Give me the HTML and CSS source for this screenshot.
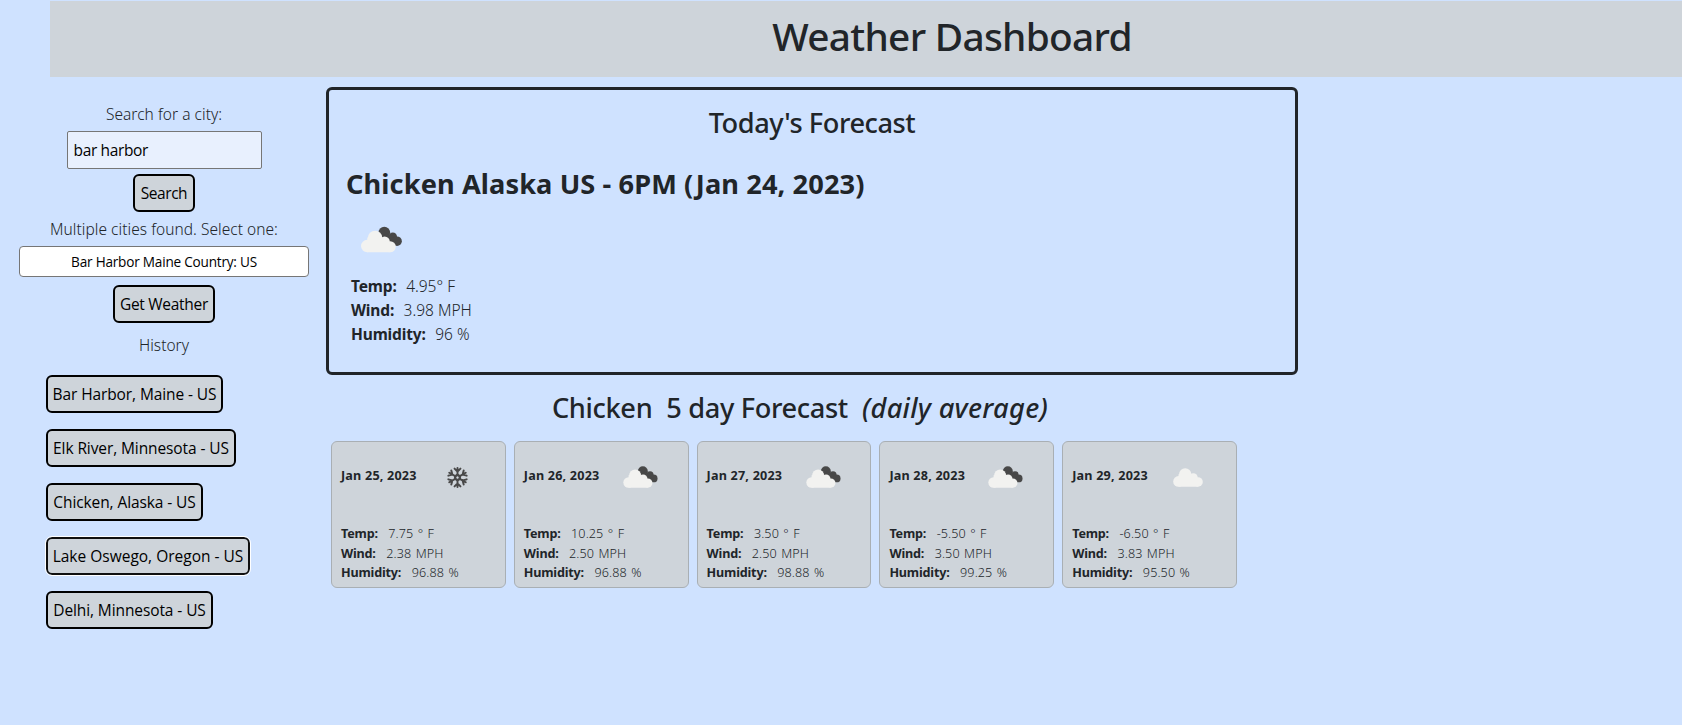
FILE: index.html
```html
<!DOCTYPE html>
<html lang="en">
<head>
<meta charset="utf-8">
<title>Weather Dashboard</title>
<link rel="stylesheet" href="styles.css">
</head>
<body>
<svg width="0" height="0" class="defs" aria-hidden="true">
  <symbol id="cloud" viewBox="32 44 106 68">
    <g fill="#f2f2f0"><circle cx="75" cy="67" r="22"/><circle cx="51" cy="92" r="19"/><circle cx="104" cy="79" r="16"/><circle cx="121" cy="94" r="17"/><path d="M51 66h52l18 24v21H51z"/></g>
  </symbol>
  <symbol id="clouds" viewBox="32 32 125 80">
    <g fill="#484848"><circle cx="103" cy="51" r="18"/><circle cx="129" cy="64" r="13"/><circle cx="142" cy="77" r="14.5"/><path d="M103 51l25 10 12 28-25-5z"/></g>
    <g fill="#f2f2f0"><circle cx="75" cy="67" r="22"/><circle cx="51" cy="92" r="19"/><circle cx="104" cy="79" r="16"/><circle cx="121" cy="94" r="17"/><path d="M51 66h43l27 24v21H51z"/></g>
  </symbol>
  <symbol id="snow" viewBox="-32 -32 64 64">
    <g id="arm" fill="none" stroke="#484848" stroke-width="6" stroke-linecap="round"><path d="M0-8V-29M-9-27L0-18L9-27M0-8L7-4V4"/></g>
    <use href="#arm" transform="rotate(60)"/><use href="#arm" transform="rotate(120)"/><use href="#arm" transform="rotate(180)"/><use href="#arm" transform="rotate(240)"/><use href="#arm" transform="rotate(300)"/>
  </symbol>
</svg>
<header class="banner"><h1>Weather Dashboard</h1></header>
<main class="layout">
  <aside class="sidebar">
    <label class="label" for="city">Search for a city:</label>
    <input class="city" id="city" type="text" value="bar harbor">
    <button class="btn search">Search</button>
    <p class="label pick">Multiple cities found. Select one:</p>
    <div class="select">Bar Harbor Maine Country: US</div>
    <button class="btn get">Get Weather</button>
    <p class="label history-title">History</p>
    <div class="history">
      <button class="btn h1">Bar Harbor, Maine - US</button>
      <button class="btn h2">Elk River, Minnesota - US</button>
      <button class="btn h3">Chicken, Alaska - US</button>
      <button class="btn h4 focused">Lake Oswego, Oregon - US</button>
      <button class="btn h5">Delhi, Minnesota - US</button>
    </div>
  </aside>
  <section class="content">
    <div class="today">
      <h2>Today's Forecast</h2>
      <h3>Chicken Alaska US - 6PM (Jan 24, 2023)</h3>
      <svg class="today-icon"><use href="#clouds"/></svg>
      <div class="stats">
        <p><b>Temp:</b><span>4.95° F</span></p>
        <p><b>Wind:</b><span>3.98 MPH</span></p>
        <p><b>Humidity:</b><span>96 %</span></p>
      </div>
    </div>
    <h2 class="five"><span>Chicken</span><span>5 day Forecast</span><em>(daily average)</em></h2>
    <div class="cards">
      <article class="card">
        <div class="top"><b>Jan 25, 2023</b><svg class="snow"><use href="#snow"/></svg></div>
        <p><b>Temp:</b><span>7.75 ° F</span></p><p><b>Wind:</b><span>2.38 MPH</span></p><p><b>Humidity:</b><span>96.88 %</span></p>
      </article>
      <article class="card">
        <div class="top"><b>Jan 26, 2023</b><svg class="clouds"><use href="#clouds"/></svg></div>
        <p><b>Temp:</b><span>10.25 ° F</span></p><p><b>Wind:</b><span>2.50 MPH</span></p><p><b>Humidity:</b><span>96.88 %</span></p>
      </article>
      <article class="card">
        <div class="top"><b>Jan 27, 2023</b><svg class="clouds"><use href="#clouds"/></svg></div>
        <p><b>Temp:</b><span>3.50 ° F</span></p><p><b>Wind:</b><span>2.50 MPH</span></p><p><b>Humidity:</b><span>98.88 %</span></p>
      </article>
      <article class="card">
        <div class="top"><b>Jan 28, 2023</b><svg class="clouds"><use href="#clouds"/></svg></div>
        <p><b>Temp:</b><span>-5.50 ° F</span></p><p><b>Wind:</b><span>3.50 MPH</span></p><p><b>Humidity:</b><span>99.25 %</span></p>
      </article>
      <article class="card">
        <div class="top"><b>Jan 29, 2023</b><svg class="cloud"><use href="#cloud"/></svg></div>
        <p><b>Temp:</b><span>-6.50 ° F</span></p><p><b>Wind:</b><span>3.83 MPH</span></p><p><b>Humidity:</b><span>95.50 %</span></p>
      </article>
    </div>
  </section>
</main>
</body>
</html>
```
FILE: styles.css
```css
* { box-sizing: border-box; }
html { height: 100%; overflow: hidden; background: #cfe2ff; }
body { margin: 0; padding-top: 1px; height: 725px; overflow: hidden; color: #212529; font: 300 15.5px/24px "Noto Sans", sans-serif; }
h1, h2, h3, p { margin: 0; }
b { font-weight: 700; }
.defs { display: none; }

.banner { height: 76px; margin-left: 50px; padding-left: 172px; background: #ced4da; text-align: center; }
.banner h1 { font-size: 38.8px; font-weight: 500; line-height: 70px; letter-spacing: -.7px; }

.layout { display: flex; }
.sidebar { width: 326px; padding: 25px 0 0 2px; display: flex; flex-direction: column; align-items: center; }
.label { letter-spacing: .04px; }
.city { width: 195px; height: 38px; margin-top: 5px; padding: 0 6px; border: 1px solid #767676; border-radius: 2px; background: #e8f0fe; color: #000; font: 400 15.5px "Open Sans", sans-serif; letter-spacing: -.35px; }
.btn { height: 38px; padding: 0; border: 2px solid #000; border-radius: 6px; background: #ced4da; color: #000; font: 400 15.5px "Open Sans", sans-serif; letter-spacing: -.1px; white-space: nowrap; }
.search { width: 62px; margin-top: 5px; letter-spacing: -.45px; }
.pick { margin-top: 5px; }
.select { width: 290px; height: 31px; margin-top: 5px; border: 1px solid #767676; border-radius: 4px; background: #fff; color: #000; font: 400 13.6px/30px "Open Sans", sans-serif; letter-spacing: -.22px; text-align: center; }
.get { width: 102px; margin-top: 8px; letter-spacing: -.28px; }
.history-title { margin-top: 10px; }
.history { align-self: flex-start; margin: 18px 0 0 44px; display: flex; flex-direction: column; align-items: flex-start; gap: 16px; }
.h1 { width: 177px; }
.h2 { width: 190px; }
.h3 { width: 157px; }
.h4 { width: 204px; letter-spacing: 0; }
.h5 { width: 167px; }
.focused { outline: 1px solid #fff; border-color: #101010; }

.content { width: 972px; padding-top: 10px; }
.today { height: 288px; padding: 16px 17px; border: 3px solid #212529; border-radius: 6px; }
h2 { font-size: 27.2px; font-weight: 500; line-height: 34px; letter-spacing: -.45px; text-align: center; }
.today h3 { margin-top: 27px; font-size: 27.2px; font-weight: 700; line-height: 34px; letter-spacing: .1px; }
.today-icon { display: block; width: 41px; height: 27px; margin: 25px 0 21px 15px; }
.stats { padding-left: 5px; }
.stats p, .card p { display: flex; }
.stats b { margin-right: 9.5px; letter-spacing: -.15px; }
.stats span { letter-spacing: 0; }

.five { width: 948px; margin-top: 16px; display: flex; justify-content: center; gap: 14px; letter-spacing: -.35px; }
.five em { letter-spacing: .3px; }
.cards { margin: 16px 0 0 5px; width: 906px; display: grid; grid-template-columns: repeat(5, 1fr); gap: 8px; }
.card { height: 147px; padding: 23px 9px 0; border: 1px solid #a9afb4; border-radius: 6px; background: #ced4da; font-size: 12.6px; line-height: 19.7px; }
.top { display: flex; align-items: center; height: 22px; margin-bottom: 37px; }
.top b { width: 99px; letter-spacing: .2px; }
.top svg { margin-top: 2px; flex: none; }
.clouds { width: 35px; height: 22px; }
.snow { width: 21px; height: 21px; margin-left: 7px; }
.cloud { width: 30px; height: 19px; margin-left: 2px; }
.card p b { margin-right: 10.5px; letter-spacing: -.18px; }
.card p span { letter-spacing: .1px; word-spacing: 1px; }
```
